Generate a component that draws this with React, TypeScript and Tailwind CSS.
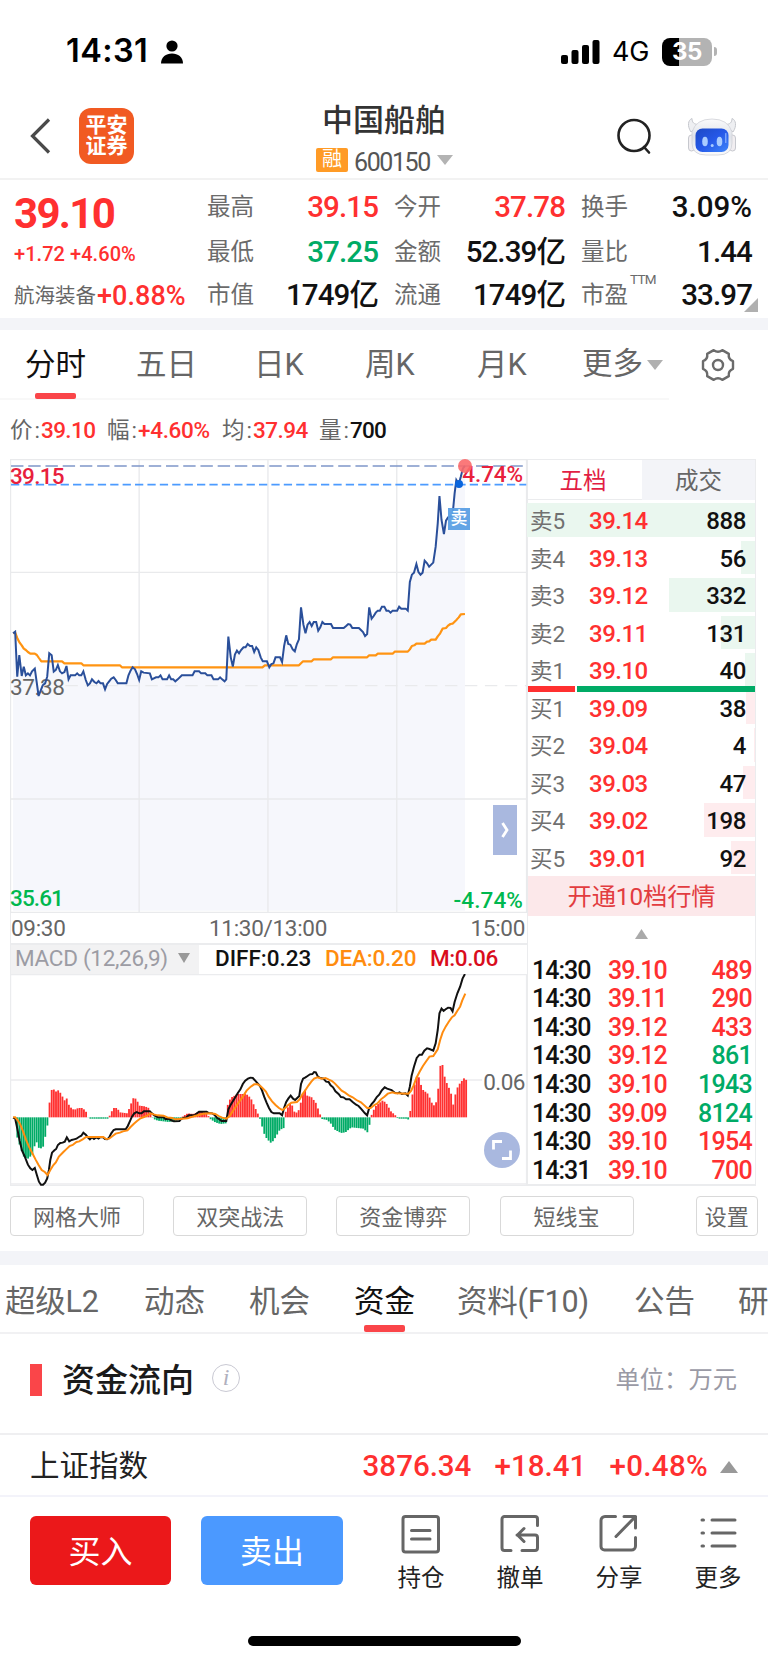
import React from "react";
import clsx from "clsx";

// ── DATA ──
const QUOTES = [
  [
    { label: "最高", value: "39.15", color: "text-[#ff3030]" },
    { label: "今开", value: "37.78", color: "text-[#ff3030]" },
    { label: "换手", value: "3.09%", color: "text-[#111]" },
  ],
  [
    { label: "最低", value: "37.25", color: "text-[#00ab66]" },
    { label: "金额", value: "52.39亿", color: "text-[#111]" },
    { label: "量比", value: "1.44", color: "text-[#111]" },
  ],
  [
    { label: "市值", value: "1749亿", color: "text-[#111]" },
    { label: "流通", value: "1749亿", color: "text-[#111]" },
    { label: "市盈", value: "33.97", color: "text-[#111]", note: "TTM" },
  ],
];

const SELLS = [
  { name: "卖5", price: "39.14", vol: 888, bar: 228 },
  { name: "卖4", price: "39.13", vol: 56, bar: 14 },
  { name: "卖3", price: "39.12", vol: 332, bar: 86 },
  { name: "卖2", price: "39.11", vol: 131, bar: 34 },
  { name: "卖1", price: "39.10", vol: 40, bar: 10 },
];

const BUYS = [
  { name: "买1", price: "39.09", vol: 38, bar: 9 },
  { name: "买2", price: "39.04", vol: 4, bar: 1 },
  { name: "买3", price: "39.03", vol: 47, bar: 12 },
  { name: "买4", price: "39.02", vol: 198, bar: 51 },
  { name: "买5", price: "39.01", vol: 92, bar: 24 },
];

const TRADES = [
  { time: "14:30", price: "39.10", vol: 489, up: true },
  { time: "14:30", price: "39.11", vol: 290, up: true },
  { time: "14:30", price: "39.12", vol: 433, up: true },
  { time: "14:30", price: "39.12", vol: 861, up: false },
  { time: "14:30", price: "39.10", vol: 1943, up: false },
  { time: "14:30", price: "39.09", vol: 8124, up: false },
  { time: "14:30", price: "39.10", vol: 1954, up: true },
  { time: "14:31", price: "39.10", vol: 700, up: true },
];

const PRICE_LINE =
  "38,700 44,695 50,830 56,765 63,828 69,800 75,826 81,820 87,826 93,814 101,806 107,850 112,888 118,872 124,856 131,850 137,830 143,760 150,766 156,815 162,810 168,795 174,814 180,820 187,816 193,798 199,838 205,826 218,826 224,820 230,826 236,826 242,814 249,840 255,856 261,850 267,838 274,846 280,850 286,843 292,850 299,850 305,868 311,852 317,844 323,836 330,832 336,840 342,850 367,850 373,826 379,812 385,802 392,808 398,822 404,840 410,814 417,818 435,820 441,838 453,832 460,832 466,826 472,838 485,838 491,826 497,838 503,838 509,844 516,838 528,826 559,826 565,814 578,814 584,820 596,820 602,826 614,826 620,838 633,838 639,832 645,838 652,844 657,838 663,710 670,772 676,800 682,764 688,752 694,760 700,750 707,742 713,742 719,732 726,738 732,738 738,756 744,742 750,750 757,772 763,784 775,784 782,802 788,792 794,790 800,772 813,772 819,786 825,738 831,706 837,732 843,734 850,748 856,754 862,732 868,718 874,622 881,674 887,700 893,674 899,666 905,678 911,666 918,666 924,692 930,682 936,666 942,672 961,672 967,684 998,684 1005,678 1011,672 1017,674 1023,684 1042,684 1048,690 1054,696 1060,708 1066,702 1072,622 1079,656 1085,648 1091,638 1097,632 1103,632 1109,620 1116,620 1122,632 1128,632 1134,638 1140,632 1153,632 1159,620 1165,626 1178,626 1184,632 1190,546 1196,524 1202,518 1209,492 1215,516 1221,524 1227,518 1233,482 1240,490 1246,500 1252,494 1258,488 1265,440 1271,370 1276,288 1282,360 1289,402 1295,362 1301,352 1307,350 1314,346 1320,280 1325,240 1332,252 1338,230 1344,205 1350,198";

const AVG_LINE =
  "38,700 44,698 50,714 57,728 63,736 69,746 75,750 81,756 88,761 101,761 107,765 113,774 120,784 180,784 187,790 236,790 242,796 348,796 354,802 762,802 769,796 868,796 874,790 880,784 905,784 911,778 961,778 967,772 1066,772 1072,766 1091,766 1097,761 1140,761 1146,755 1184,755 1190,748 1196,738 1203,736 1209,731 1233,731 1240,725 1246,724 1252,719 1265,719 1271,709 1278,700 1285,686 1295,684 1301,677 1308,672 1314,671 1320,665 1326,659 1332,652 1338,643 1350,642";

const DIFF_LINE =
  "38,563 44,566 50,595 57,632 64,662 72,680 81,704 88,715 94,720 101,714 107,735 113,755 119,764 125,764 131,758 137,745 142,720 146,690 151,668 158,661 163,657 168,645 175,639 182,638 188,635 194,622 201,634 208,630 215,628 222,626 229,621 236,617 242,608 249,614 255,622 261,628 267,622 273,627 280,622 286,626 292,621 299,622 305,627 311,628 317,622 323,610 330,600 336,598 365,598 371,588 377,574 383,560 390,550 397,546 404,550 411,550 418,544 435,544 441,550 448,556 459,562 475,562 480,567 492,567 497,571 505,574 521,573 526,567 534,563 541,562 548,556 565,556 572,550 578,545 600,545 606,549 616,550 624,556 630,563 637,568 643,573 657,573 663,538 670,524 677,512 684,500 691,488 698,478 705,462 712,452 720,446 727,443 734,444 741,452 748,460 755,468 761,482 767,500 774,518 781,534 788,546 795,550 812,550 819,556 825,533 831,516 837,506 844,497 851,506 857,510 863,504 869,498 874,462 880,446 887,442 893,438 900,433 907,432 912,426 917,427 923,440 930,444 939,446 947,455 954,456 960,466 967,472 974,484 983,492 990,501 997,502 1005,508 1015,508 1024,516 1034,524 1041,528 1050,538 1059,549 1066,556 1072,534 1079,522 1086,514 1094,501 1101,494 1108,482 1117,472 1124,476 1137,480 1146,488 1154,490 1160,487 1167,492 1177,490 1184,497 1190,470 1195,438 1202,410 1210,384 1218,374 1225,374 1232,362 1240,355 1247,357 1258,362 1265,340 1271,300 1276,250 1282,236 1288,243 1294,238 1301,233 1308,234 1314,244 1320,216 1328,190 1336,170 1343,146 1350,132";

const DEA_LINE =
  "38,562 44,562 51,570 58,582 66,602 75,628 84,650 95,672 103,688 112,705 121,720 130,726 138,735 146,720 155,705 162,697 171,680 184,666 192,658 202,648 211,645 222,636 230,634 240,628 250,621 300,621 308,627 317,626 327,618 336,611 348,608 357,604 370,601 379,591 388,582 397,574 408,565 418,561 430,555 437,550 446,553 458,556 475,557 486,562 500,564 508,568 522,567 545,565 553,562 566,558 578,555 590,551 612,550 625,552 635,558 645,563 657,566 667,558 678,540 690,522 703,503 716,482 728,470 738,463 748,463 756,468 764,476 772,485 780,500 790,514 800,525 810,534 820,540 828,534 836,526 846,518 862,516 870,508 878,493 887,480 896,466 904,455 912,446 922,442 934,446 945,444 955,449 964,453 972,460 981,470 992,482 1002,488 1014,497 1024,502 1035,510 1048,517 1058,526 1066,534 1076,534 1086,526 1096,520 1106,508 1116,500 1126,491 1140,487 1148,490 1186,491 1194,482 1201,466 1209,444 1218,426 1228,408 1238,393 1247,380 1258,378 1271,358 1278,330 1285,308 1294,290 1303,275 1312,262 1320,256 1328,242 1336,230 1342,212 1351,191";

// [x, height] turning points of the histogram, positive is above the zero line
const HIST: [number, number][] = [
  [44, -2], [50, -60], [56, -80], [68, -117], [80, -125], [94, -112], [103, -75], [108, -75], [113, -93], [124, -93], [131, -60], [138, -22],
  [144, 47], [151, 88], [160, 80], [165, 75], [170, 83], [178, 68], [188, 50], [195, 58], [201, 33], [215, 22], [227, 28], [240, 28], [252, 14],
  [257, -4], [315, -4], [321, 12], [330, 28], [340, 28], [348, 15], [370, 12], [378, 35], [388, 60], [396, 54], [405, 35], [420, 33], [432, 28],
  [440, 3], [446, -5], [458, -10], [490, -14], [520, -8], [532, 4], [545, 12], [560, 10], [580, 18], [600, 14], [609, -4], [625, -15], [640, -20],
  [656, -18], [662, 45], [672, 60], [690, 70], [715, 70], [728, 58], [740, 30], [750, 8], [757, -10], [765, -45], [775, -65], [788, -78],
  [800, -60], [812, -38], [824, -32], [830, 20], [845, 45], [857, 10], [870, 25], [876, 60], [885, 85], [892, 65], [905, 60], [918, 42],
  [928, 12], [935, -5], [950, -8], [960, -18], [972, -37], [990, -47], [1003, -45], [1020, -30], [1055, -34], [1069, -47], [1075, -8],
  [1081, 15], [1092, 35], [1110, 50], [1120, 45], [1135, 18], [1150, 4], [1155, -4], [1183, -4], [1188, -10], [1193, 35], [1199, 80],
  [1211, 126], [1218, 118], [1225, 85], [1243, 70], [1256, 38], [1262, 35], [1268, 50], [1274, 100], [1280, 172], [1287, 150], [1292, 115],
  [1305, 85], [1310, 70], [1316, 38], [1322, 68], [1330, 95], [1347, 117], [1354, 112],
];

function histAt(x: number) {
  const i = HIST.findIndex(([px]) => px >= x);
  if (i <= 0) return HIST[Math.max(i, 0)][1];
  const [x0, y0] = HIST[i - 1];
  const [x1, y1] = HIST[i];
  return y0 + ((y1 - y0) * (x - x0)) / (x1 - x0);
}

const BARS = Array.from({ length: 211 }, (_, i) => {
  const x = 44 + i * 6.235;
  return { x, h: histAt(Math.min(x, 1354)) };
});

// ── ICONS ──
function Robot() {
  return (
    <svg width="50" height="42" viewBox="0 0 50 42">
      <defs>
        <linearGradient id="shell" x1="0" y1="0" x2="0" y2="1">
          <stop offset="0" stopColor="#fafafb" />
          <stop offset="0.5" stopColor="#dfe2e9" />
          <stop offset="1" stopColor="#fbfbfc" />
        </linearGradient>
        <linearGradient id="face" x1="0" y1="0" x2="1" y2="1">
          <stop offset="0" stopColor="#1d49c4" />
          <stop offset="0.5" stopColor="#2558e8" />
          <stop offset="1" stopColor="#3f86fa" />
        </linearGradient>
      </defs>
      <path d="M4 16C0 10 1 4 5 2.500c0 4 2 6 7 6zM46 16c4-6 3-12-1-13.500 0 4-2 6-7 6z" fill="#eeeff2" stroke="#c6c8ce" strokeWidth="1" />
      <rect x="1.500" y="19" width="6" height="16" rx="3" fill="#f1eef1" stroke="#c6c8ce" strokeWidth="1" />
      <rect x="42.500" y="19" width="6" height="16" rx="3" fill="#f1eef1" stroke="#c6c8ce" strokeWidth="1" />
      <path d="M5 16Q9 3 25 3t20 13v11q0 12-14 12H19Q5 39 5 27z" fill="url(#shell)" stroke="#cfd1d7" strokeWidth="0.800" />
      <rect x="8.500" y="12.500" width="33" height="23.500" rx="7" fill="url(#face)" />
      <ellipse cx="18" cy="25.500" rx="2.800" ry="4.800" fill="#a9ccff" />
      <ellipse cx="32.500" cy="25.500" rx="2.800" ry="4.800" fill="#a9ccff" />
      <circle cx="25.200" cy="29.500" r="1.500" fill="#a9ccff" />
      <path d="M38.800 17.500v9" stroke="#8fb5ff" strokeWidth="1.200" strokeLinecap="round" />
    </svg>
  );
}

function Gear() {
  return (
    <svg width="34" height="34" viewBox="-17 -17 34 34" fill="none" stroke="#6b6b6b" strokeWidth="2.400" strokeLinejoin="round">
      <path d="M15 3.8V-3.8Q10-5.7 10.8-11.1L4.3-14.9Q0-11.5-4.3-14.9L-10.8-11.1Q-10-5.7-15-3.8V3.8Q-10 5.7-10.8 11.1L-4.3 14.9Q0 11.5 4.3 14.9L10.8 11.1Q10 5.7 15 3.8Z" />
      <circle r="5" />
    </svg>
  );
}

function Triangle({ className, up }: { className: string; up?: boolean }) {
  return (
    <svg className={className} viewBox="0 0 10 10" preserveAspectRatio="none" fill="currentColor">
      <path d={up ? "M5 0 10 10H0z" : "M0 0H10L5 10z"} />
    </svg>
  );
}

const iconProps = {
  fill: "none",
  stroke: "#666",
  strokeWidth: 3,
  strokeLinecap: "round" as const,
  strokeLinejoin: "round" as const,
};

const ACTIONS = [
  {
    label: "持仓",
    icon: (
      <>
        <rect x="3" y="2.5" width="35.5" height="35.5" rx="2.5" />
        <path d="M11.500 16.500h18.500M11.500 25h18.500" />
      </>
    ),
  },
  {
    label: "撤单",
    icon: <path d="M38.500 11.500V5a2.500 2.500 0 0 0-2.500-2.500H5.500A2.500 2.500 0 0 0 3 5v29A2.500 2.500 0 0 0 5.500 36.500h6.500M23 36.500H36A2.500 2.500 0 0 0 38.500 34V23.500a2.500 2.500 0 0 0-2.500-2.500H18M25 14.500 18.500 21l6.500 6.500" />,
  },
  {
    label: "分享",
    icon: <path d="M17.500 2.500H7A4 4 0 0 0 3 6.500v26A3.500 3.500 0 0 0 6.500 36h27a4 4 0 0 0 4-4V23.500M26 2.500H37.500V14M37.500 2.500 18 22.500" />,
  },
  {
    label: "更多",
    icon: <path d="M5 6H6.500M15 6H38M5 19H6.500M15 19H38M5 32H6.500M15 32H38" />,
  },
];

// ── CHARTS ──
function PriceChart() {
  return (
    <div className="relative h-[454px]">
      <svg className="block h-[454px] w-[519px]" viewBox="29 177 1507 1362" preserveAspectRatio="none" fill="none">
        <polygon points={`38,1532 ${PRICE_LINE} 1350,1532`} fill="#f6f7fc" />
        <g stroke="#e9eaec" strokeWidth="4">
          <path d="M30.500 177V1539M404 177V1536M778 177V1536M1152 177V1536M1529 177V1539M29 179H1529M29 517H1529M29 1197H1529M29 1537H1529" />
          <path d="M190 857H1529" strokeDasharray="36 22" />
        </g>
      </svg>
      <span className="absolute left-0 top-[216px] text-[22.5px] leading-[24px] tracking-[-0.4px] text-[#666]">37.38</span>
      <svg className="absolute left-0 top-0 h-[454px] w-[519px]" viewBox="29 177 1507 1362" preserveAspectRatio="none" fill="none">
        <path d="M32 198H1528" stroke="#7f97c9" strokeWidth="5" strokeDasharray="36 14" />
        <path d="M32 254H1528" stroke="#4c9bff" strokeWidth="5" strokeDasharray="24 12" />
        <polyline points={AVG_LINE} stroke="#ff9412" strokeWidth="6.500" strokeLinejoin="round" />
        <polyline points={PRICE_LINE} stroke="#2a4f9a" strokeWidth="5.800" />
      </svg>
      <span className="absolute left-0 top-[5px] text-[22.5px] font-medium leading-[24px] tracking-[-0.7px] text-[#e8203c]">39.15</span>
      <span className="absolute right-[4px] top-[3px] text-[22.5px] font-medium leading-[24px] tracking-[-0.1px] text-[#e8203c]">4.74%</span>
      <span className="absolute left-[448px] top-0 h-[14px] w-[14px] rounded-full bg-[#fb6a6c]/90" />
      <span className="absolute left-[445px] top-[21px] h-2 w-2 rounded-full bg-[#0b66dd]" />
      <span className="absolute left-[438px] top-[49px] h-[22px] w-[22px] bg-[#5b9fe4]/95 text-center text-[17px] font-medium leading-[21px] text-white">卖</span>
      <span className="absolute left-0 top-[427px] text-[22.5px] font-medium leading-[24px] tracking-[-0.9px] text-[#00b84f]">35.61</span>
      <span className="absolute bottom-[1px] right-[4px] text-[22.5px] font-medium leading-[24px] tracking-[0.1px] text-[#00b84f]">-4.74%</span>
      <button className="absolute left-[483px] top-[346px] flex h-[50px] w-6 items-center justify-center bg-[#a9b8df]">
        <svg width="8" height="16" viewBox="0 0 8 16" fill="none" stroke="#fff" strokeWidth="2.800">
          <path d="M1.500 1 6 8 1.500 15" />
        </svg>
      </button>
    </div>
  );
}

function MacdChart() {
  return (
    <div className="relative h-[212px]">
      <svg className="block h-[212px] w-[519px]" viewBox="29 132 1507 636" preserveAspectRatio="none" fill="none">
        <path d="M30.500 132V768M1529 132V768M29 134H1529M29 450H1400M29 762H1529M29 767H1529" stroke="#ebecee" strokeWidth="4" />
        {BARS.map(({ x, h }) => (
          <rect key={x} x={x - 2.6} y={h > 0 ? 562 - h : 562} width="5.400" height={Math.abs(h)} fill={h > 0 ? "#ff3030" : "#00ab66"} />
        ))}
        <polyline points={DIFF_LINE} stroke="#111" strokeWidth="5.800" />
        <polyline points={DEA_LINE} stroke="#ff8c0f" strokeWidth="5.800" />
      </svg>
      <span className="absolute right-[2px] top-[96px] text-[22.5px] leading-[24px] tracking-[-0.5px] text-[#666]">0.06</span>
      <button className="absolute left-[474px] top-[158px] flex h-9 w-9 items-center justify-center rounded-full bg-[#a9b8df]">
        <svg width="22" height="22" viewBox="0 0 22 22" fill="none" stroke="#fff" strokeWidth="2.800">
          <path d="M2.500 10.500V2.500H11M19.500 11.500V19.500H11" />
        </svg>
      </button>
    </div>
  );
}

function BookRow({ row, sell }: { row: (typeof SELLS)[number]; sell?: boolean }) {
  return (
    <div className="relative mb-1 flex h-[33.500px] items-center pb-px pl-[2px] pr-[9px] pt-[4px]">
      <div
        className={clsx("absolute right-0 top-0 h-[33.500px]", sell ? "bg-[#eaf7ef]" : "bg-[#feecee]")}
        style={{ width: row.bar }}
      />
      <span className="relative w-[59px] text-[22.5px] text-[#707070]">{row.name}</span>
      <span className="relative text-[24px] font-medium tracking-[-0.5px] text-[#ff3030]">{row.price}</span>
      <span className="relative ml-auto text-[24px] font-medium tracking-[-0.4px] text-[#111]">{row.vol}</span>
    </div>
  );
}

export default function App() {
  return (
    <div className="h-[1663px] w-[768px] overflow-hidden bg-white font-['Roboto','Noto_Sans_CJK_SC',sans-serif] leading-none whitespace-nowrap">
      {/* ── STATUS BAR ── */}
      <div className="flex h-[103px] items-center pl-[66px] pr-[51px]">
        <span className="w-[95px] font-['Inter',sans-serif] text-[32.5px] font-semibold tracking-[0.400px]">14:31</span>
        <svg width="22" height="24" viewBox="0 0 22 24">
          <circle cx="11" cy="6" r="5.6" />
          <path d="M0 23.500C0 17 5 13.500 11 13.500S22 17 22 23.500z" />
        </svg>
        <svg className="ml-auto" width="39" height="24" viewBox="0 0 39 24">
          <rect x="0" y="15" width="7" height="9" rx="2" />
          <rect x="10.500" y="10" width="7" height="14" rx="2" />
          <rect x="21" y="5" width="7" height="19" rx="2" />
          <rect x="31.500" y="0" width="7" height="24" rx="2" />
        </svg>
        <span className="ml-[12px] w-[50px] font-['Inter',sans-serif] text-[27px] tracking-[-0.200px]">4G</span>
        <div className="flex items-center">
          <span className="flex h-[28px] w-[50px] items-center justify-center rounded-[8px] bg-[linear-gradient(90deg,#000_35%,#b3b3b3_35%)] font-['Inter',sans-serif] text-[24px] font-bold tracking-[-0.5px] text-white">
            35
          </span>
          <span className="ml-0.5 h-[9px] w-[3px] rounded-r-full bg-[#b3b3b3]" />
        </div>
      </div>

      {/* ── HEADER ── */}
      <header className="flex h-[77px] items-start border-b-2 border-[#f2f2f2] pl-[29px]">
        <svg className="mt-[15px]" width="22" height="36" viewBox="0 0 22 36" fill="none" stroke="#4a4a4a" strokeWidth="3.200">
          <path d="M20 1.500 3.500 18 20 34.500" />
        </svg>
        <div className="ml-[28px] mt-[5px] flex h-[56px] w-[55px] flex-col items-center justify-center rounded-[12px] bg-[#f15a22] text-[21px] font-bold leading-[21px] text-white">
          <span>平安</span>
          <span>证券</span>
        </div>
        <div className="ml-[182px] flex w-[136px] flex-col items-start">
          <h1 className="ml-[6px] text-[31px] font-medium leading-[36px] text-[#333]">中国船舶</h1>
          <div className="mt-[6px] flex items-center">
            <span className="h-6 w-[32px] rounded-[2px] bg-[#ff9b26] text-center text-[20px] leading-[23px] text-white">融</span>
            <span className="ml-[6px] mt-[5px] text-[25px] tracking-[-1.400px] text-[#555]">600150</span>
            <Triangle className="ml-[7px] h-[10px] w-[16px] text-[#b3b3b3]" />
          </div>
        </div>
        <svg className="ml-[165px] mt-[15px]" width="36" height="37" viewBox="0 0 36 37" fill="none" stroke="#222" strokeWidth="2.600">
          <circle cx="17" cy="17.500" r="15.500" />
          <path d="M27 29 32 34.500" strokeLinecap="round" />
        </svg>
        <div className="ml-[34px] mt-[13px]">
          <Robot />
        </div>
      </header>

      {/* ── QUOTE ── */}
      <section className="relative flex h-[138px] pl-[14px] pr-[15px]">
        <div className="flex w-[193px] flex-col text-[#ff3030]">
          <span className="mt-[13px] text-[42px] font-bold leading-[42px] tracking-[-1.700px]">39.10</span>
          <span className="mt-[9px] text-[20px] font-medium leading-[20px] tracking-[0.050px]">+1.72 +4.60%</span>
          <span className="mt-[18px] flex items-center leading-[28px]">
            <span className="text-[20.5px] text-[#666]">航海装备</span>
            <span className="ml-px text-[27px] font-medium tracking-[0.050px]">+0.88%</span>
          </span>
        </div>
        <div className="flex flex-1 flex-col pt-[5px]">
          {QUOTES.map((row, i) => (
            <div key={i} className={clsx("flex items-center gap-4", i === 2 ? "h-[42px]" : "h-[45px]")}>
              {row.map((cell) => (
                <div key={cell.label} className="relative flex w-[171px] items-center justify-between">
                  <span className="text-[23.5px] text-[#6b6b6b]">{cell.label}</span>
                  <span
                    className={clsx(
                      "text-[29.5px] font-medium",
                      cell.value.endsWith("%") ? "tracking-normal" : "tracking-[-0.900px]",
                      cell.color,
                    )}
                  >
                    {cell.value}
                  </span>
                  {cell.note && <span className="absolute left-[49px] top-[-8px] text-[13.500px] tracking-[-0.700px] text-[#6b6b6b]">{cell.note}</span>}
                </div>
              ))}
            </div>
          ))}
        </div>
        <svg className="absolute bottom-[6px] right-[10px]" width="14" height="14" viewBox="0 0 14 14" fill="#b0b0b0">
          <path d="M14 0V14H0z" />
        </svg>
      </section>
      <div className="h-3 bg-[#f3f4f8]" />

      {/* ── PERIOD TABS ── */}
      <nav className="flex h-[70px] items-center text-[30.5px] text-[#666]">
        <div className="flex h-[70px] w-[669px] border-b-2 border-[#f8f8f8]">
          <span className="relative ml-[25px] w-[111px] leading-[70px] text-[#111]">
            分时
            <i className="absolute left-[10px] top-[63px] h-[6px] w-[41px] rounded-[2px] bg-[#fa4549]" />
          </span>
          <span className="w-[118px] leading-[70px]">五日</span>
          <span className="w-[111px] leading-[70px]">日K</span>
          <span className="w-[112px] leading-[70px]">周K</span>
          <span className="w-[105px] leading-[70px]">月K</span>
          <span className="flex items-center leading-[70px]">
            更多
            <Triangle className="ml-[4px] mt-0.5 h-[10px] w-[16px] shrink-0 text-[#b0b0b0]" />
          </span>
        </div>
        <div className="ml-[32px]">
          <Gear />
        </div>
      </nav>

      {/* ── INFO LINE ── */}
      <div className="flex h-[59px] items-center pl-[10px] text-[22.5px] leading-[30px] text-[#666]">
        <span className="w-[97px]">价<span className="ml-[2px] mr-px">:</span><b className="font-medium tracking-[-0.600px] text-[#ff3030]">39.10</b></span>
        <span className="w-[115px]">幅<span className="ml-[2px] mr-px">:</span><b className="font-medium tracking-[-0.300px] text-[#ff3030]">+4.60%</b></span>
        <span className="w-[97px]">均<span className="ml-[2px] mr-px">:</span><b className="font-medium tracking-[-0.500px] text-[#ff3030]">37.94</b></span>
        <span>量<span className="ml-[2px] mr-px">:</span><b className="font-medium tracking-[-0.800px] text-[#111]">700</b></span>
      </div>

      {/* ── CHART AREA ── */}
      <section className="flex h-[727px] pl-[10px]">
        <div className="w-[517px]">
          <PriceChart />
          <div className="flex h-[30px] items-center justify-between border-l border-[#ebecee] pr-[2px] pt-px text-[22.5px] tracking-[-0.300px] text-[#666]">
            <span>09:30</span>
            <span>11:30/13:00</span>
            <span>15:00</span>
          </div>
          <div className="flex h-[31px] items-start border-l border-t-2 border-[#ebecee] text-[22.5px] font-medium leading-[26px]">
            <div className="flex h-[29px] w-[188px] items-center bg-[#f2f2f3] pb-[3px] pl-[4px] font-normal tracking-[-0.300px] text-[#9c9ca4]">
              MACD (12,26,9)
              <Triangle className="ml-[10px] h-[10px] w-[12px] text-[#999]" />
            </div>
            <span className="ml-[16px] w-[110px] text-[#111]">DIFF:0.23</span>
            <span className="w-[105px] tracking-[-0.200px] text-[#ff8c0f]">DEA:0.20</span>
            <span className="tracking-[-0.400px] text-[#d90d1c]">M:0.06</span>
          </div>
          <MacdChart />
        </div>

        {/* Order book */}
        <div className="w-[229px] border-b-2 border-l border-r border-t border-[#ebecee]">
          <div className="mb-[3px] flex h-[40px] text-center text-[23.5px] leading-[43px]">
            <span className="w-[114px] border-b border-[#ebecee] pr-[4px] text-[#e21f44]">五档</span>
            <span className="flex-1 bg-[#f3f4f8] text-[#666]">成交</span>
          </div>
          {SELLS.map((row) => (
            <BookRow key={row.name} row={row} sell />
          ))}
          <div className="relative z-10 -mb-px -mt-[5px] flex h-[6px] gap-[2px]">
            <span className="w-[47px] bg-[#ff3030]" />
            <span className="flex-1 bg-[#00ab66]" />
          </div>
          {BUYS.map((row) => (
            <BookRow key={row.name} row={row} />
          ))}
          <div className="-mt-[2px] h-[40px] bg-[#fce8ea] text-center text-[24.3px] leading-[42px] tracking-[-0.100px] text-[#e23c40]">开通10档行情</div>
          <div className="flex h-[40px] items-start justify-center pt-[13px]">
            <Triangle up className="h-[10px] w-[13px] text-[#aaa]" />
          </div>
          {TRADES.map((t, i) => (
            <div key={i} className="flex h-[28.570px] items-center pl-[4px] pr-[3px] text-[25px] font-medium tracking-[-1px]">
              <span className="w-[76px] text-[#111]">{t.time}</span>
              <span className="text-[#ff3030]">{t.price}</span>
              <span className={clsx("ml-auto tracking-[-0.700px]", t.up ? "text-[#ff3030]" : "text-[#00ab66]")}>{t.vol}</span>
            </div>
          ))}
        </div>
      </section>

      {/* ── TOOLS ── */}
      <div className="flex h-[65px] items-start pl-[10px] pt-[10px] text-center text-[22px] leading-[41px] text-[#666]">
        {["网格大师", "双突战法", "资金博弈", "短线宝"].map((name) => (
          <span key={name} className="mr-[29.200px] h-[40px] w-[134px] rounded-[4px] border-[1.500px] border-[#d9d9d9]">
            {name}
          </span>
        ))}
        <span className="ml-[33px] h-[40px] w-[62px] rounded-[4px] border-[1.500px] border-[#d9d9d9]">设置</span>
      </div>
      <div className="h-[14px] bg-[#f3f4f8]" />

      {/* ── SECTION TABS ── */}
      <nav className="flex h-[69px] border-b-2 border-[#f1f1f3] pl-[5px] text-[30.5px] leading-[73px] text-[#666]">
        <span className="w-[139px] shrink-0 tracking-[-0.200px]">超级L2</span>
        <span className="w-[105px] shrink-0">动态</span>
        <span className="w-[105px] shrink-0">机会</span>
        <span className="relative w-[103px] shrink-0 text-[#111]">
          资金
          <i className="absolute left-[10px] top-[60px] h-[7px] w-[41px] rounded-[2px] bg-[#fa4549]" />
        </span>
        <span className="w-[177px] shrink-0 tracking-[-0.200px]">资料(F10)</span>
        <span className="w-[104px] shrink-0">公告</span>
        <span className="shrink-0">研究</span>
      </nav>

      {/* ── FUND FLOW ── */}
      <section className="flex h-[101px] items-center border-b-2 border-[#efeff1] pb-[7px] pl-[30px] pr-[31px]">
        <span className="h-8 w-3 bg-[#fa4549]" />
        <h2 className="ml-[20px] text-[33px] font-medium text-[#1a1a1a]">资金流向</h2>
        <span className="mb-[4px] ml-[18px] h-[28px] w-[28px] rounded-full border-[1.500px] border-[#c9c9d3] text-center font-['Liberation_Serif',serif] text-[24px] italic leading-[24px] text-[#b0b0be]">
          i
        </span>
        <span className="ml-auto text-[24.300px] text-[#9a9aa5]">单位：万元</span>
      </section>

      {/* ── INDEX ── */}
      <section className="flex h-[62px] items-center border-b-2 border-[#f3f3fa] pl-[30px] pr-[30px] pt-[4px]">
        <span className="text-[29.5px] text-[#222]">上证指数</span>
        <span className="ml-auto flex items-center text-[29.5px] font-medium text-[#ff3030]">
          <span className="w-[132px]">3876.34</span>
          <span className="w-[115px]">+18.41</span>
          <span className="tracking-[0.300px]">+0.48%</span>
          <Triangle up className="ml-[12px] h-[12px] w-[18px] text-[#999]" />
        </span>
      </section>

      {/* ── BOTTOM BAR ── */}
      <footer className="flex h-[139px] pl-[30px] pt-[19px]">
        <button className="h-[69px] w-[141px] rounded-[6px] bg-[#eb181a] pt-[3px] text-[32px] text-white">买入</button>
        <button className="ml-[30px] h-[69px] w-[142px] rounded-[6px] bg-[#4b99ff] pt-[3px] text-[32px] text-white">卖出</button>
        <div className="ml-[54px] flex gap-[51px]">
          {ACTIONS.map((a) => (
            <div key={a.label} className="-mt-[2px] flex w-[48px] flex-col items-center">
              <svg width="42" height="41" viewBox="0 0 42 41" {...iconProps}>
                {a.icon}
              </svg>
              <span className="mt-[12px] text-[23.5px] text-[#222]">{a.label}</span>
            </div>
          ))}
        </div>
      </footer>
      <div className="mx-auto h-[10px] w-[273px] rounded-full bg-black" />
    </div>
  );
}
